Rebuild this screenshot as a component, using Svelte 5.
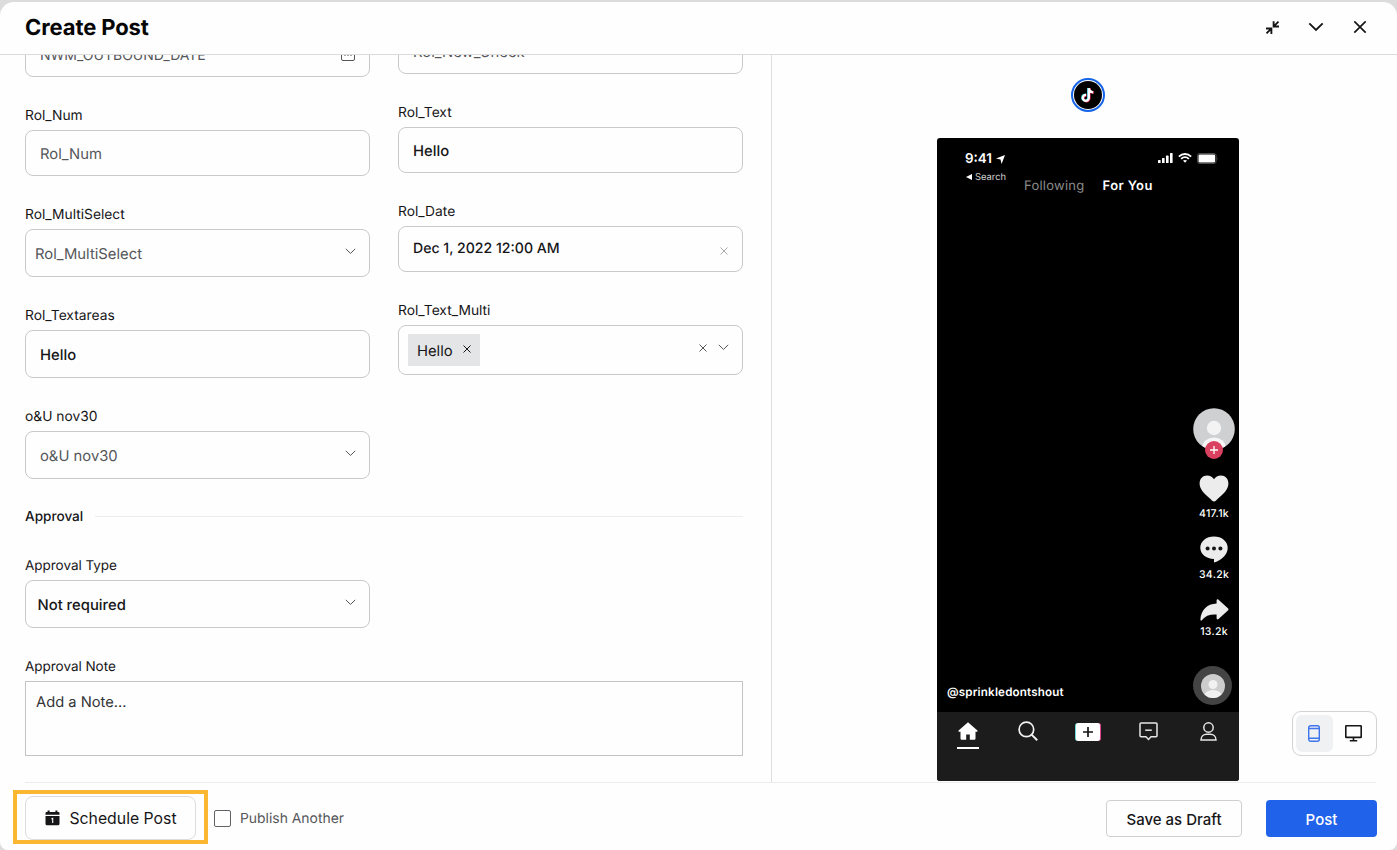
<script lang="ts">
  type Field = {
    label: string;
    text: string;
    kind: 'input' | 'select' | 'calendar' | 'date' | 'tags';
    filled?: boolean;
    tall?: boolean;
    inset?: number;
  };

  const leftFields: Field[] = [
    { label: '', text: 'NWM_OUTBOUND_DATE', kind: 'calendar' },
    { label: 'Rol_Num', text: 'Rol_Num', kind: 'input' },
    { label: 'Rol_MultiSelect', text: 'Rol_MultiSelect', kind: 'select', tall: true, inset: 9 },
    { label: 'Rol_Textareas', text: 'Hello', kind: 'input', filled: true, tall: true },
    { label: 'o&U nov30', text: 'o&U nov30', kind: 'select', tall: true }
  ];

  const rightFields: Field[] = [
    { label: '', text: 'Rol_New_Check', kind: 'input' },
    { label: 'Rol_Text', text: 'Hello', kind: 'input', filled: true },
    { label: 'Rol_Date', text: 'Dec 1, 2022 12:00 AM', kind: 'date', filled: true },
    { label: 'Rol_Text_Multi', text: 'Hello', kind: 'tags' }
  ];

  const approvalType: Field = {
    label: 'Approval Type',
    text: 'Not required',
    kind: 'select',
    filled: true,
    tall: true,
    inset: 11.5
  };

  let publishAnother = $state(false);
  let device = $state('mobile');
</script>

{#snippet chevron()}
  <svg class="chevron" width="11" height="7" viewBox="0 0 11 7" fill="none" stroke="currentColor">
    <path d="M0.8 0.9L5.5 5.4L10.2 0.9" />
  </svg>
{/snippet}

{#snippet cross(size: number)}
  <svg width={size} height={size} viewBox="0 0 8 8" fill="none" stroke="currentColor">
    <path d="M0.5 0.5L7.5 7.5M7.5 0.5L0.5 7.5" />
  </svg>
{/snippet}

{#snippet field(f: Field)}
  <div class="field">
    {#if f.label}
      <div class="label">{f.label}</div>
    {/if}
    <div class="box {f.kind}" class:tall={f.tall} class:filled={f.filled} style="padding-left: {f.inset ?? (f.kind === 'tags' ? 9 : 14)}px">
      {#if f.kind === 'tags'}
        <span class="tag"><span class="value">{f.text}</span> {@render cross(8)}</span>
        <span class="tag-actions">{@render cross(8)} {@render chevron()}</span>
      {:else}
        <span class="value">{f.text}</span>
      {/if}
      {#if f.kind === 'select'}
        {@render chevron()}
      {:else if f.kind === 'date'}
        <span class="clear">{@render cross(8)}</span>
      {:else if f.kind === 'calendar'}
        <svg width="14" height="14" viewBox="0 0 14 14" fill="none" stroke="currentColor">
          <rect x="0.5" y="1.5" width="13" height="12" rx="1.5" />
          <path d="M3.5 8.5h1M6.5 8.5h1M9.5 8.5h1M0.5 4.5h13" />
        </svg>
      {/if}
    </div>
  </div>
{/snippet}

<div class="modal">
  <header>
    <h1>Create Post</h1>
    <div class="window-actions">
      <button aria-label="Minimize">
        <svg width="15" height="15" viewBox="0 0 16 16" fill="none" stroke="currentColor" stroke-width="2">
          <path d="M14.4 1.8L9.6 6.6M9.2 1.2V6.9H14.9M1.6 14.2L6.4 9.4M1.1 9.1H6.8V14.8" />
        </svg>
      </button>
      <button aria-label="Collapse">
        <svg width="16" height="10" viewBox="0 0 16 10" fill="none" stroke="currentColor" stroke-width="1.9">
          <path d="M1.3 1.4L8 8L14.7 1.4" />
        </svg>
      </button>
      <button aria-label="Close">
        <svg width="14" height="14" viewBox="0 0 14 14" fill="none" stroke="currentColor" stroke-width="1.7">
          <path d="M1.3 1.3L12.7 12.7M12.7 1.3L1.3 12.7" />
        </svg>
      </button>
    </div>
  </header>

  <main>
    <section class="form">
      <div class="columns">
        <div class="column left">
          {#each leftFields as f}
            {@render field(f)}
          {/each}
        </div>
        <div class="column right">
          {#each rightFields as f}
            {@render field(f)}
          {/each}
        </div>
      </div>

      <div class="divider">
        <h2>Approval</h2>
        <span class="rule"></span>
      </div>

      <div class="approval">
        <div class="approval-type">{@render field(approvalType)}</div>
        <div class="label">Approval Note</div>
        <div class="note">Add a Note...</div>
      </div>
    </section>

    <section class="preview">
      <div class="channel">
        <svg width="28" height="28" viewBox="0 0 28 28">
          <circle cx="14" cy="14" r="14" fill="#000" />
          <g fill="none" stroke-width="2.3">
            <path stroke="#25c9d8" d="M14.2 7V16.7A3 3 0 1 1 11.6 13.6M14.3 7.2C14.6 9.6 16.2 10.9 18.6 11" />
            <path stroke="#ee2a55" d="M15.4 7.6V17.3A3 3 0 1 1 12.6 14.3M15.5 7.8C15.9 10.2 17.5 11.5 19.8 11.6" />
            <path stroke="#fff" d="M14.8 7.2V17A3 3 0 1 1 12.1 13.9M14.9 7.3C15.2 9.8 16.9 11.1 19.2 11.3" />
          </g>
        </svg>
      </div>

      <div class="phone">
        <div class="screen">
          <div class="status">
            <span class="time">9:41</span>
            <svg class="location" width="9" height="9" viewBox="0 0 9 9" fill="#fff">
              <path d="M9 0L5.6 9L4.5 4.6L0 3.6Z" />
            </svg>
            <div class="signals">
              <svg width="15" height="10" viewBox="0 0 15 10" fill="#fff">
                <rect x="0" y="7" width="2.6" height="3" rx="0.6" />
                <rect x="4" y="5" width="2.6" height="5" rx="0.6" />
                <rect x="8" y="2.6" width="2.6" height="7.4" rx="0.6" />
                <rect x="12" y="0" width="2.6" height="10" rx="0.6" />
              </svg>
              <svg width="14" height="10" viewBox="0 0 14 10" fill="none" stroke="#fff" stroke-width="1.9">
                <path d="M0.9 3.6C4.4 0.1 9.6 0.1 13.1 3.6" />
                <path d="M3.1 5.9C5.4 3.8 8.6 3.8 10.9 5.9" />
                <path d="M5 7.6Q7 6.2 9 7.6L7 9.8Z" fill="#fff" stroke="none" />
              </svg>
              <svg width="22" height="11" viewBox="0 0 22 11">
                <rect x="0.5" y="0.5" width="18.6" height="10" rx="2" fill="none" stroke="#4d4d4d" />
                <rect x="1.5" y="1.5" width="16.6" height="8" rx="1.2" fill="#fff" />
                <path d="M20 4v3q1.2 -1.5 0 -3" fill="#555" />
              </svg>
            </div>
          </div>
          <div class="back"><span class="arrow"></span>Search</div>
          <div class="tabs">
            <span>Following</span>
            <span class="active">For You</span>
          </div>

          <div class="rail">
            <div class="avatar">
              <svg width="42" height="42" viewBox="0 0 42 42">
                <clipPath id="face"><circle cx="21" cy="21" r="20.8" /></clipPath>
                <g clip-path="url(#face)">
                  <rect width="42" height="42" fill="#cfd0d1" />
                  <circle cx="21" cy="20" r="7.2" fill="#f3f3f3" />
                  <ellipse cx="21" cy="39" rx="11.5" ry="9.5" fill="#f6f6f6" />
                </g>
              </svg>
              <span class="follow">
                <svg width="8" height="8" viewBox="0 0 8 8" stroke="#fff" stroke-width="1.3"><path d="M4 0v8M0 4h8" /></svg>
              </span>
            </div>
            <svg class="heart" width="30" height="27" viewBox="0 0 30 27" fill="#ececec">
              <path d="M15 26.6C13.6 26.6 12.7 25.2 11.2 23.8C5.8 19 0.6 14.6 0.6 8.5C0.6 3.8 3.8 0.6 8 0.6C11 0.6 13.6 2 15 4.3C16.4 2 19 0.6 22 0.6C26.2 0.6 29.4 3.8 29.4 8.5C29.4 14.6 24.2 19 18.8 23.8C17.3 25.2 16.4 26.6 15 26.6Z" />
            </svg>
            <span class="count">417.1k</span>
            <svg class="comment" width="28" height="27" viewBox="0 0 28 27">
              <path fill="#ececec" d="M14 0.4C6.3 0.4 0.3 5.2 0.3 11.8C0.3 18.2 6.2 22.8 14 23.1V26.6C20.5 24.8 27.7 19.3 27.7 11.8C27.7 5.2 21.7 0.4 14 0.4Z" />
              <g fill="#161616">
                <circle cx="7.6" cy="12.6" r="2" />
                <circle cx="14" cy="12.6" r="2" />
                <circle cx="20.4" cy="12.6" r="2" />
              </g>
            </svg>
            <span class="count">34.2k</span>
            <svg class="share" width="29" height="22" viewBox="0 0 29 22">
              <path fill="#ececec" d="M16.6 1.3C16.6 0.2 17.7 0 18.5 0.7L27.9 9.3C28.7 10 28.7 10.9 27.9 11.6L18.5 20C17.7 20.8 16.6 20.4 16.6 19.3V15.6C10 15.2 5.2 16.9 1.8 21.2C1.1 22 0.3 21.6 0.4 20.6C1 11.4 6.8 4.9 16.6 4.6Z" />
            </svg>
            <span class="count shares">13.2k</span>
            <div class="disc">
              <svg width="24" height="24" viewBox="0 0 24 24">
                <clipPath id="disc-face"><circle cx="12" cy="12" r="12" /></clipPath>
                <g clip-path="url(#disc-face)">
                  <rect width="24" height="24" fill="#cdcdcd" />
                  <circle cx="12" cy="10.5" r="4.5" fill="#f1f1f1" />
                  <ellipse cx="12" cy="22" rx="9" ry="6" fill="#f1f1f1" />
                </g>
              </svg>
            </div>
          </div>

          <div class="handle">@sprinkledontshout</div>
        </div>

        <nav>
          <span class="home">
            <svg width="20" height="18" viewBox="0 0 20 18" fill="#fff">
              <path d="M10 0.2L0.6 8.5C0.1 9 0.4 9.7 1 9.7H2.5V16.4C2.5 17.2 3 17.7 3.8 17.7H8.2V12.6H11.8V17.7H16.2C17 17.7 17.5 17.2 17.5 16.4V9.7H19C19.6 9.7 19.9 9 19.4 8.5Z" />
            </svg>
          </span>
          <span>
            <svg width="20" height="20" viewBox="0 0 20 20" fill="none" stroke="#f2f2f2" stroke-width="1.7">
              <circle cx="8.4" cy="8.4" r="7.3" />
              <path d="M13.6 13.6L19.2 19.2" stroke-width="2" />
            </svg>
          </span>
          <span class="create">
            <svg width="10" height="10" viewBox="0 0 10 10" stroke="#161616" stroke-width="1.7"><path d="M5 0v10M0 5h10" /></svg>
          </span>
          <span>
            <svg width="19" height="19" viewBox="0 0 19 19" fill="none" stroke="#e6e6e6" stroke-width="1.5">
              <path d="M2 0.9H17Q18 0.9 18 1.9V13.8Q18 14.8 17 14.8H12L9.5 17.4L7 14.8H2Q1 14.8 1 13.8V1.9Q1 0.9 2 0.9Z" />
              <path d="M6.2 8.2H12.8" />
            </svg>
          </span>
          <span>
            <svg width="17" height="19" viewBox="0 0 17 19" fill="none" stroke="#e6e6e6" stroke-width="1.5">
              <circle cx="8.5" cy="5.5" r="4.7" />
              <path d="M1 18C1 14.4 3.6 12.3 6.6 12.3H10.4C13.4 12.3 16 14.4 16 18Z" />
            </svg>
          </span>
        </nav>
      </div>

      <div class="devices">
        <button class:selected={device === 'mobile'} onclick={() => (device = 'mobile')} aria-label="Mobile preview">
          <svg width="12" height="17" viewBox="0 0 12 17" fill="none" stroke="currentColor" stroke-width="1.4">
            <rect x="0.7" y="0.7" width="10.6" height="15.6" rx="2" />
            <path d="M0.7 3.5H11.3M0.7 13.2H11.3" />
          </svg>
        </button>
        <button class:selected={device === 'desktop'} onclick={() => (device = 'desktop')} aria-label="Desktop preview">
          <svg width="17" height="17" viewBox="0 0 17 17" fill="none" stroke="currentColor" stroke-width="1.6">
            <rect x="0.8" y="0.8" width="15.4" height="11.6" rx="0.5" />
            <path d="M8.5 12.4V15.4M4.8 15.8H12.2" />
          </svg>
        </button>
      </div>
    </section>
  </main>

  <footer>
    <div class="highlight">
      <button class="schedule">
        <svg width="15" height="16" viewBox="0 0 15 16">
          <path fill="#161618" d="M0.5 3.2Q0.5 2 1.7 2H2.6V0.5H4.6V2H10.4V0.5H12.4V2H13.3Q14.5 2 14.5 3.2V4.8H0.5ZM0.5 6H14.5V13.7Q14.5 15.3 12.9 15.3H2.1Q0.5 15.3 0.5 13.7Z" />
          <path stroke="#fff" stroke-width="1.1" fill="none" d="M6.4 9L7.7 8.3V13" />
        </svg>
        Schedule Post
      </button>
    </div>
    <label class="publish">
      <input type="checkbox" bind:checked={publishAnother} />
      <span>Publish Another</span>
    </label>
    <div class="submit">
      <button class="draft">Save as Draft</button>
      <button class="post">Post</button>
    </div>
  </footer>
</div>

<style>
  :global(body) {
    background: #dcdcdc;
  }

  .modal {
    box-sizing: border-box;
    width: 1397px;
    height: 848px;
    margin-top: 2px;
    background: #fefefe;
    border-radius: 14px 14px 8px 8px;
    overflow: hidden;
    display: flex;
    flex-direction: column;
    font-family: Inter, sans-serif;
    text-rendering: geometricPrecision;
    color: #161618;
  }

  .modal * {
    box-sizing: border-box;
  }

  svg {
    display: block;
    flex: none;
  }

  button {
    font: inherit;
    color: inherit;
    background: none;
    border: none;
    padding: 0;
    display: flex;
    align-items: center;
    justify-content: center;
  }

  header {
    height: 53px;
    flex: none;
    border-bottom: 1px solid #dcdcde;
    padding: 0 21px 2px 25px;
    display: flex;
    align-items: center;
    justify-content: space-between;
  }

  h1 {
    margin: 0;
    font-size: 22px;
    line-height: 28px;
    padding-top: 1px;
    font-weight: 650;
    letter-spacing: -0.1px;
    color: #060606;
  }

  .window-actions {
    display: flex;
    gap: 10.5px;
  }

  .window-actions button {
    width: 33px;
    height: 33px;
  }

  main {
    flex: 1;
    min-height: 0;
    display: flex;
  }

  .form {
    width: 772px;
    flex: none;
    overflow: hidden;
    border-right: 1px solid #dfdfe1;
    padding: 0 28px 0 25px;
  }

  .columns {
    display: flex;
    gap: 28px;
  }

  .column {
    flex: 1;
    display: flex;
    flex-direction: column;
    gap: 28px;
  }

  /* both columns are scrolled part way under the header */
  .left {
    margin-top: -24px;
  }

  .right {
    margin-top: -27px;
  }

  .label {
    height: 20px;
    line-height: 22px;
    margin-bottom: 5px;
    font-size: 13.8px;
    white-space: nowrap;
  }

  .approval .label {
    font-size: 13.5px;
    letter-spacing: -0.03px;
  }

  .box {
    height: 46px;
    border: 1px solid #c9c9cb;
    border-radius: 8px;
    padding-right: 14px;
    display: flex;
    align-items: center;
    justify-content: space-between;
    font-size: 14.8px;
    color: #55565a;
  }

  .box.tall {
    height: 48px;
  }

  .value {
    padding-top: 2px;
  }

  .box.calendar {
    font-size: 14px;
  }

  .box.tags {
    height: 50px;
    padding-right: 13px;
  }

  .box.filled {
    color: #161618;
    font-weight: 500;
  }

  .box.date {
    font-size: 14.1px;
    padding-bottom: 2px;
  }

  .box.date .value {
    padding-top: 1px;
  }

  .box.select {
    padding-right: 13px;
    padding-bottom: 1px;
  }

  .chevron {
    margin-bottom: 2px;
    color: #55565a;
  }

  .clear {
    color: #a8a8aa;
    padding-top: 6px;
  }

  .tag {
    height: 32px;
    padding: 0 9px;
    background: #e4e5e7;
    color: #161618;
    display: flex;
    align-items: center;
    gap: 10px;
  }

  .tag svg {
    margin-bottom: 2px;
  }

  .tag-actions {
    display: flex;
    align-items: center;
    gap: 11px;
    padding-bottom: 5px;
  }

  .tag-actions .chevron {
    margin: 0;
  }

  .divider {
    height: 20px;
    margin: 27px 0 29px;
    display: flex;
    align-items: center;
    gap: 12px;
  }

  h2 {
    margin: 0;
    padding-top: 2px;
    font-size: 13.6px;
    font-weight: 500;
  }

  .rule {
    flex: 1;
    height: 1px;
    background: #ededee;
  }

  .approval-type {
    width: 345px;
    margin-bottom: 28px;
  }

  .note {
    height: 75px;
    border: 1px solid #c4c4c6;
    padding: 11px 10px;
    font-size: 14.7px;
    line-height: 19px;
    color: #333437;
  }

  .preview {
    flex: 1;
    position: relative;
    padding: 23px 0 0 7px;
    display: flex;
    flex-direction: column;
    align-items: center;
  }

  .channel {
    width: 34px;
    height: 34px;
    border: 2px solid #1664e8;
    border-radius: 50%;
    display: flex;
    align-items: center;
    justify-content: center;
  }

  .phone {
    width: 302px;
    height: 643px;
    margin-top: 26px;
    border-radius: 3px;
    overflow: hidden;
    background: #000;
    color: #fff;
    display: flex;
    flex-direction: column;
  }

  .screen {
    position: relative;
    flex: 1;
    padding: 12px 0 0 28px;
  }

  .status {
    height: 16px;
    display: flex;
    align-items: center;
  }

  .time {
    padding-top: 2px;
    font-size: 13.4px;
    font-weight: 600;
  }

  .location {
    margin: 2px 0 0 4px;
  }

  .signals {
    margin-left: auto;
    margin-right: 20px;
    display: flex;
    align-items: center;
    gap: 5px;
  }

  .back {
    height: 12px;
    margin-top: 5px;
    display: flex;
    align-items: center;
    gap: 3px;
    font-size: 9.4px;
    color: #d0d0d0;
  }

  .arrow {
    border: 3px solid transparent;
    border-right: 6px solid #fff;
    border-left: 0;
    margin-left: 1px;
  }

  .tabs {
    height: 16px;
    margin: -5px 0 0 59px;
    display: flex;
    align-items: center;
    gap: 18px;
    font-size: 13px;
    letter-spacing: 0.25px;
    color: #8b8b8b;
  }

  .tabs .active {
    color: #fff;
    font-weight: 600;
    letter-spacing: 0.4px;
  }

  .rail {
    position: absolute;
    top: 270px;
    right: 4px;
    width: 42px;
    display: flex;
    flex-direction: column;
    align-items: center;
  }

  .avatar {
    position: relative;
  }

  .follow {
    position: absolute;
    left: 12px;
    bottom: -9px;
    width: 18px;
    height: 18px;
    border-radius: 50%;
    background: #d9415e;
    display: flex;
    align-items: center;
    justify-content: center;
  }

  .heart {
    margin-top: 25px;
  }

  .count {
    height: 12px;
    margin-top: 5px;
    line-height: 13px;
    font-size: 10.5px;
    font-weight: 500;
    letter-spacing: 0.3px;
  }

  .shares {
    line-height: 11px;
  }

  .comment {
    margin-top: 17px;
  }

  .share {
    margin-top: 19px;
  }

  .disc {
    width: 39px;
    height: 39px;
    margin: 28px 3px 0 0;
    border-radius: 50%;
    background: #444;
    display: flex;
    align-items: center;
    justify-content: center;
  }

  .handle {
    position: absolute;
    left: 10px;
    bottom: 12px;
    font-size: 11.6px;
    line-height: 16px;
    font-weight: 600;
    letter-spacing: 0.18px;
  }

  nav {
    height: 69px;
    flex: none;
    background: #1c1c1c;
    padding: 8px 1px 0;
    display: flex;
  }

  nav span {
    flex: 1;
    height: 22px;
    display: flex;
    align-items: center;
    justify-content: center;
  }

  nav .home {
    flex-direction: column;
  }

  .home::after {
    content: '';
    width: 22px;
    height: 2px;
    margin: 7px 0 -9px;
    background: #fff;
  }

  nav .create {
    flex: none;
    width: 26px;
    height: 18px;
    margin: 3px 17px;
    border-radius: 3px;
    background: #fff;
    border-left: 1px solid #6fd6da;
    border-right: 1px solid #e0408c;
  }

  .devices {
    position: absolute;
    right: 20.5px;
    bottom: 26px;
    width: 85px;
    height: 45px;
    padding: 3px;
    border: 1px solid #d3d3d5;
    border-radius: 9px;
    background: #fefefe;
    display: flex;
    gap: 2px;
  }

  .devices button {
    width: 37px;
    height: 37px;
    border-radius: 6px;
  }

  .devices .selected {
    background: #f0f1f2;
    color: #3f76ee;
  }

  footer {
    position: relative;
    height: 68px;
    flex: none;
    display: flex;
    align-items: center;
    padding: 3px 20px 0 13px;
  }

  footer::before {
    content: '';
    position: absolute;
    top: 0;
    left: 25px;
    right: 21px;
    height: 1px;
    background: #ececed;
  }

  .highlight {
    width: 195px;
    height: 54px;
    margin-bottom: 2px;
    border: 4px solid #fbb731;
    padding: 2px 0 0 8px;
  }

  .schedule {
    width: 171px;
    height: 44px;
    border: 1px solid #dcdcde;
    border-radius: 8px;
    gap: 9px;
    padding: 1px 0 0 1px;
    font-size: 15.8px;
  }

  .publish {
    display: flex;
    align-items: center;
    gap: 9px;
    margin: 1px 0 0 6px;
    font-size: 13.9px;
    color: #55565a;
  }

  .publish span {
    padding-top: 1px;
  }

  .publish input {
    appearance: none;
    width: 17px;
    height: 17px;
    margin: 0;
    border: 1.5px solid #626266;
    border-radius: 2px;
  }

  .publish input:checked {
    background: #1f5fee;
  }

  .submit {
    margin: 2px 0 0 auto;
    display: flex;
    gap: 24px;
    font-size: 15px;
    font-weight: 500;
  }

  .submit button {
    padding-top: 1px;
  }

  .draft {
    width: 136px;
    height: 37px;
    border: 1px solid #cfcfd1;
    border-radius: 4px;
  }

  .post {
    width: 111px;
    height: 37px;
    border-radius: 4px;
    background: #2162ea;
    color: #fff;
  }
</style>
